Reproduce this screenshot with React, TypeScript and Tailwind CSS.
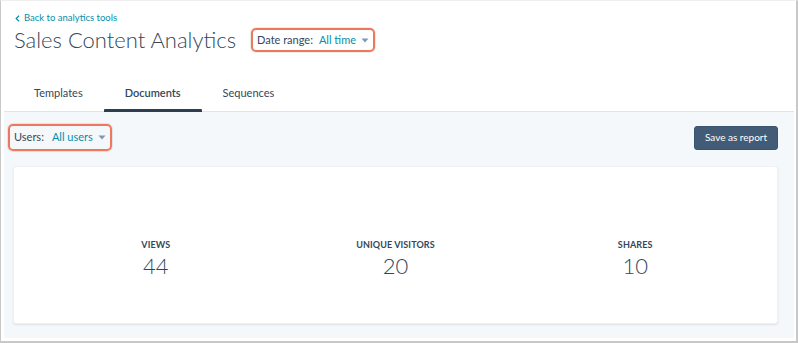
import React from "react";

const font = { fontFamily: "Lato, 'Open Sans', 'Liberation Sans', sans-serif" };

function Caret() {
  return (
    <svg width="8" height="5" viewBox="0 0 8 5" className="ml-[5px]">
      <path d="M0.5 0.5 L7.5 0.5 L4 4.5 Z" fill="#7c98b6" />
    </svg>
  );
}

function Stat({ label, value }: { label: string; value: string }) {
  return (
    <div className="flex flex-col items-center">
      <div className="text-[9px] font-bold leading-[12px] tracking-[0.1px] text-[#33475b]">{label}</div>
      <div className="mt-[2px] text-[22px] font-light leading-[26px] text-[#33475b]">{value}</div>
    </div>
  );
}

export default function App() {
  return (
    <div
      style={font}
      className="w-[798px] h-[343px] bg-white border-l border-l-[#c9c9c9] border-t border-t-[#efefef] border-r-2 border-r-[#c8c8c8] border-b-2 border-b-[#c8c8c8] pl-[3px] pr-[2px] pb-[3px] flex flex-col overflow-hidden"
    >
      <div className="flex-1 flex flex-col">
        {/* header */}
        <div className="pl-[10px] pt-[10px]">
          <div className="flex items-center h-[14px] text-[9.5px] text-[#0091ae]">
            <svg width="5" height="7" viewBox="0 0 5 7" className="ml-[1px] mr-[4px]">
              <path d="M4 0.8 L1.2 3.5 L4 6.2" stroke="#0091ae" strokeWidth="1.2" fill="none" />
            </svg>
            <span>Back to analytics tools</span>
          </div>
          <div className="flex items-center h-[30px]">
            <h1 className="text-[22px] font-light leading-[30px] text-[#33475b]">Sales Content Analytics</h1>
            <div className="ml-[15px] flex items-center h-[24px] px-[4px] border-2 border-[#ef775c] rounded-[5px] shadow-[0_0_0_1px_rgba(0,0,0,0.08)] text-[11px]">
              <span className="text-[#33475b]">Date range:</span>
              <span className="ml-[6px] text-[#0091ae]">All time</span>
              <Caret />
            </div>
          </div>
        </div>
        {/* tabs */}
        <div className="mt-[20px] flex h-[37px] pl-[9px] border-b border-[#dfe3eb]">
          {[
            { t: "Templates", a: false },
            { t: "Documents", a: true },
            { t: "Sequences", a: false },
          ].map((x) => (
            <div
              key={x.t}
              className={
                "px-[21px] flex items-center justify-center text-[11px] text-[#33475b] relative " +
                (x.a ? "font-semibold" : "")
              }
            >
              {x.t}
              {x.a ? <div className="absolute left-0 right-0 bottom-[-1px] h-[3px] bg-[#2d3e50] rounded-t-[1px]" /> : null}
            </div>
          ))}
        </div>
        {/* gray body */}
        <div className="flex-1 bg-[#f5f8fa] pt-[12px] pl-[4px] pr-[16px]">
          <div className="flex items-center justify-between">
            <div className="flex items-center h-[27px] px-[4px] border-2 border-[#ef775c] rounded-[5px] shadow-[0_0_0_1px_rgba(0,0,0,0.08)] text-[11px]">
              <span className="text-[#33475b]">Users:</span>
              <span className="ml-[8px] text-[#0091ae]">All users</span>
              <Caret />
            </div>
            <button className="h-[24px] w-[84px] bg-[#425b76] text-white text-[10px] rounded-[3px] border border-[#3d5470]">
              Save as report
            </button>
          </div>
          <div className="mt-[15px] ml-[5px] h-[158px] bg-white rounded-[3px] shadow-[0_1px_2px_rgba(45,62,80,0.12)] border border-[#eef1f5] px-[22px] pt-[72px] grid grid-cols-3">
            <Stat label="VIEWS" value="44" />
            <Stat label="UNIQUE VISITORS" value="20" />
            <Stat label="SHARES" value="10" />
          </div>
        </div>
      </div>
    </div>
  );
}
